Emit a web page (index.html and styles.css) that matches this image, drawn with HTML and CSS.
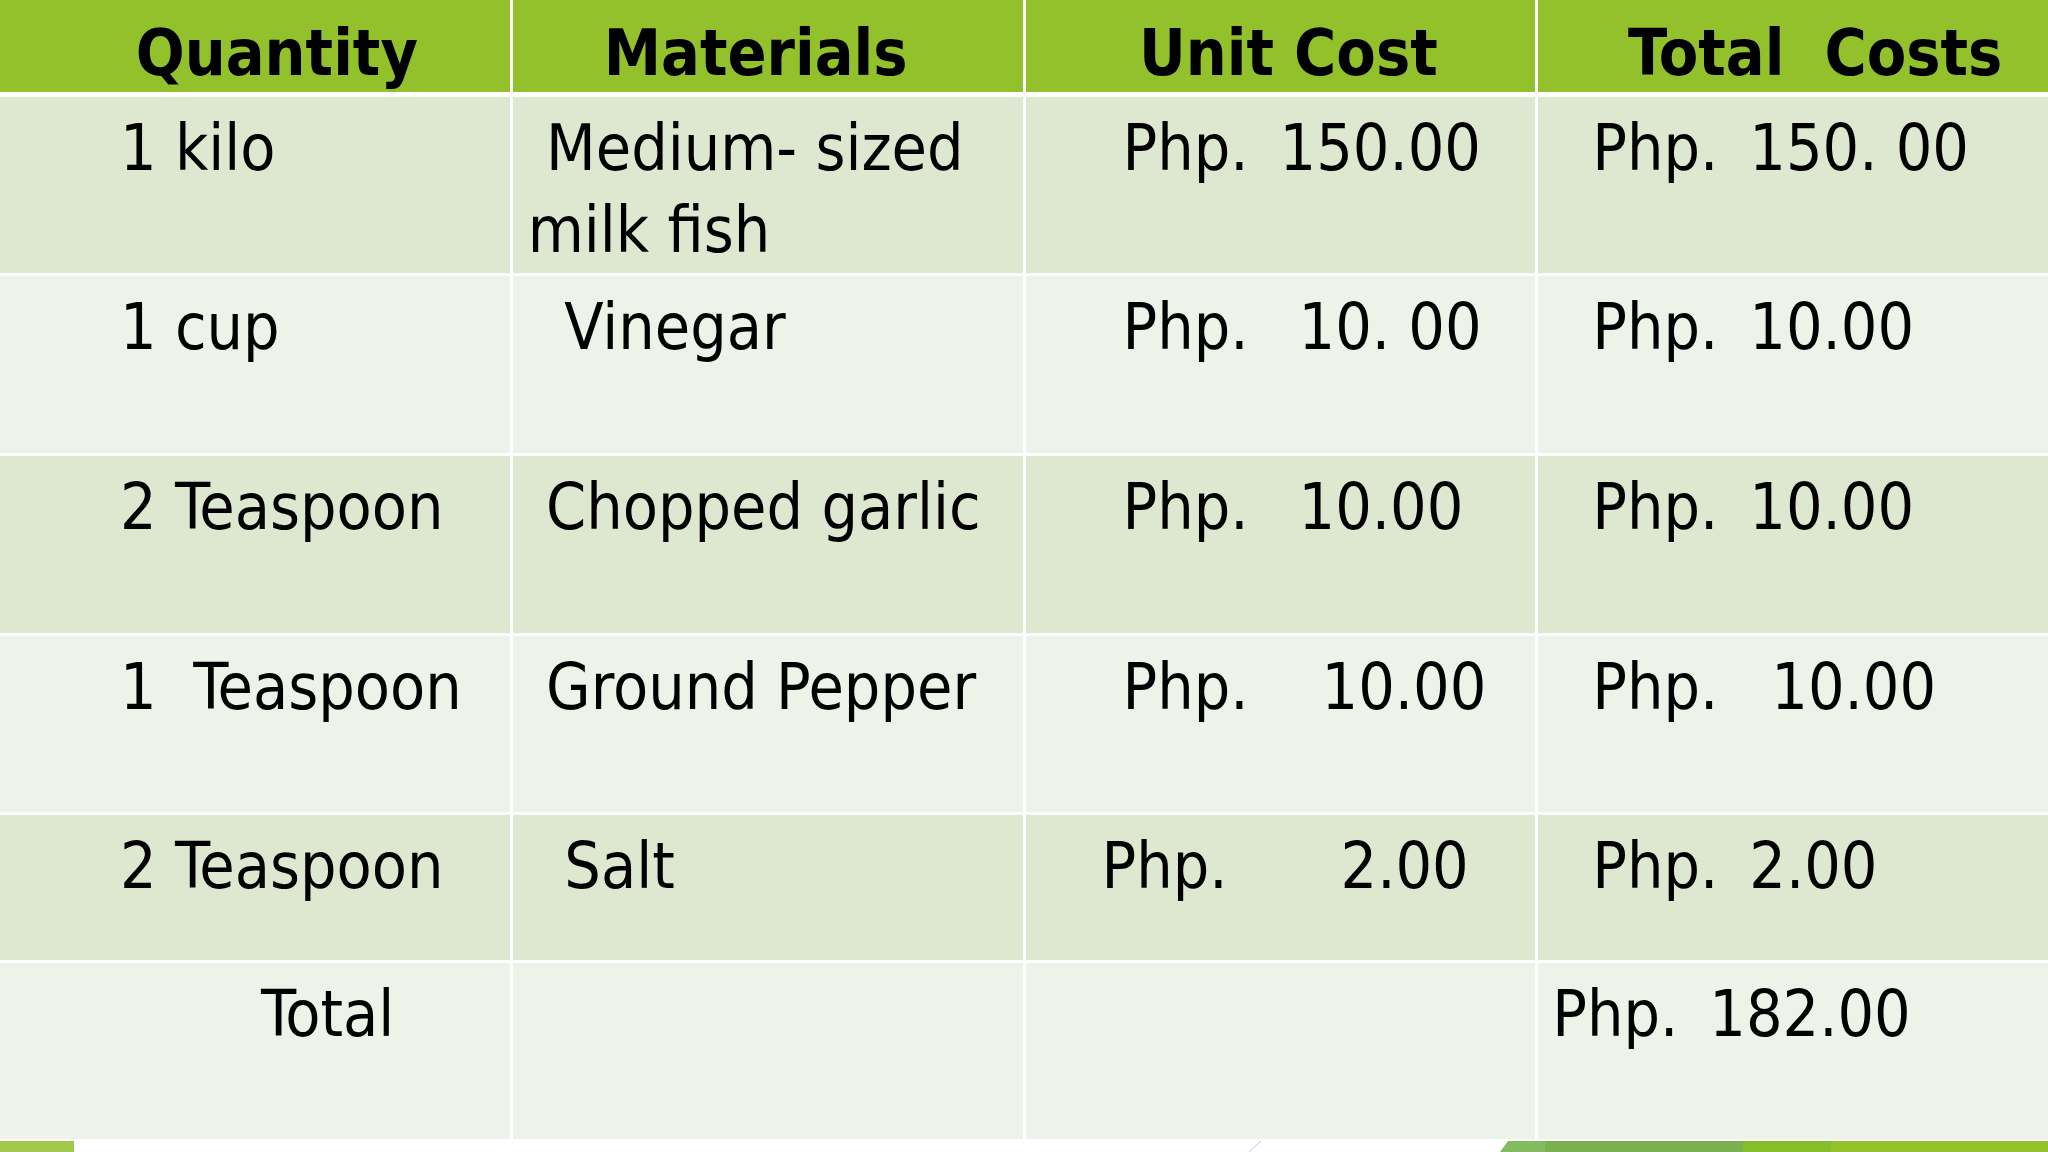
FILE: index.html
```html
<!DOCTYPE html>
<html>
<head>
<meta charset="utf-8">
<link rel="stylesheet" href="styles.css">
</head>
<body>
<div class="slide">
  <div class="table">
    <div class="cell head h0">Quantity</div>
    <div class="cell head h1">Materials</div>
    <div class="cell head h2">Unit Cost</div>
    <div class="cell head h3">Total&nbsp; Costs</div>

    <div class="cell dark c0">1 kilo</div>
    <div class="cell dark c1"> Medium- sized<br>milk fish</div>
    <div class="cell dark c2"><span class="cur">Php.</span><span class="amt">150.00</span></div>
    <div class="cell dark c3"><span class="cur">Php.</span><span class="amt">150. 00</span></div>

    <div class="cell light c0">1 cup</div>
    <div class="cell light c1">  Vinegar</div>
    <div class="cell light c2"><span class="cur">Php.</span><span class="amt s19">10. 00</span></div>
    <div class="cell light c3"><span class="cur">Php.</span><span class="amt">10.00</span></div>

    <div class="cell dark c0">2 Teaspoon</div>
    <div class="cell dark c1"> Chopped garlic</div>
    <div class="cell dark c2"><span class="cur">Php.</span><span class="amt s19">10.00</span></div>
    <div class="cell dark c3"><span class="cur">Php.</span><span class="amt">10.00</span></div>

    <div class="cell light c0">1  Teaspoon</div>
    <div class="cell light c1"> Ground Pepper</div>
    <div class="cell light c2"><span class="cur">Php.</span><span class="amt s42">10.00</span></div>
    <div class="cell light c3"><span class="cur">Php.</span><span class="amt s22">10.00</span></div>

    <div class="cell dark c0">2 Teaspoon</div>
    <div class="cell dark c1">  Salt</div>
    <div class="cell dark c2 shift"><span class="cur">Php.</span><span class="amt s82">2.00</span></div>
    <div class="cell dark c3"><span class="cur">Php.</span><span class="amt">2.00</span></div>

    <div class="cell light c0 total">Total</div>
    <div class="cell light c1"></div>
    <div class="cell light c2"></div>
    <div class="cell light c3 sum"><span class="cur">Php.</span><span class="amt">182.00</span></div>
  </div>
  <div class="strip">
    <div class="bar-left"></div>
    <div class="strip-gap"></div>
    <svg class="hair" width="15" height="11" viewBox="0 0 15 11"><line x1="14" y1="0" x2="2" y2="11" stroke="#c9c9c9" stroke-width="1"/></svg>
    <div class="strip-fill"></div>
    <div class="bar-right"></div>
  </div>
</div>
</body>
</html>
```

FILE: styles.css
```css
html, body {
  margin: 0;
  padding: 0;
  background: #ffffff;
}

.slide {
  width: 2048px;
  height: 1152px;
  display: flex;
  flex-direction: column;
  overflow: hidden;
  font-family: "DejaVu Sans Condensed", "DejaVu Sans", sans-serif;
  font-stretch: condensed;
  color: #000000;
}

.table {
  display: grid;
  grid-template-columns: repeat(4, 1fr);
  grid-template-rows: 94px 176px 177px 177px 176px 145px 176px;
  column-gap: 3px;
  row-gap: 3px;
  background: #ffffff;
  height: 1141px;
}

.cell {
  font-size: 64px;
  line-height: 82px;
  white-space: pre;
  box-sizing: border-box;
  overflow: visible;
}

.head {
  background: #93c12b;
  font-weight: bold;
  text-align: center;
  padding-top: 12px;
  margin-bottom: 2px;
}

.h0 { padding-left: 44px; }
.h1 { padding-right: 24px; }
.h2 { padding-left: 16px; }
.h3 { padding-left: 44px; }

.dark {
  background: #dee8d0;
}

.light {
  background: #eef3ea;
}

.c0, .c1, .c2, .c3 {
  padding-top: 10px;
}

.c0 { padding-left: 120px; }
.c1 { padding-left: 15px; }
.c2 { padding-left: 97px; }
.c3 { padding-left: 54px; }

.c2.shift { padding-left: 76px; }
.c0.total { padding-left: 261px; }
.c3.sum { padding-left: 14px; }

.cur {
  display: inline-block;
  width: 157px;
}

.s19 { padding-left: 19px; }
.s22 { padding-left: 22px; }
.s42 { padding-left: 42px; }
.s82 { padding-left: 82px; }

.strip {
  height: 11px;
  display: flex;
  flex: none;
}

.bar-left {
  width: 74px;
  background: #a0c84b;
}

.strip-gap {
  width: 1173px;
}

.hair {
  display: block;
  flex: none;
}

.strip-fill {
  flex: 1;
}

.bar-right {
  width: 548px;
  clip-path: polygon(8px 0, 100% 0, 100% 100%, 0 100%);
  background: linear-gradient(to right,
    #82bb60 0px, #82bb60 45px,
    #7bb04f 45px, #7bb04f 243px,
    #86bd2b 243px, #86bd2b 331px,
    #93c22c 331px, #93c22c 100%);
}
```
